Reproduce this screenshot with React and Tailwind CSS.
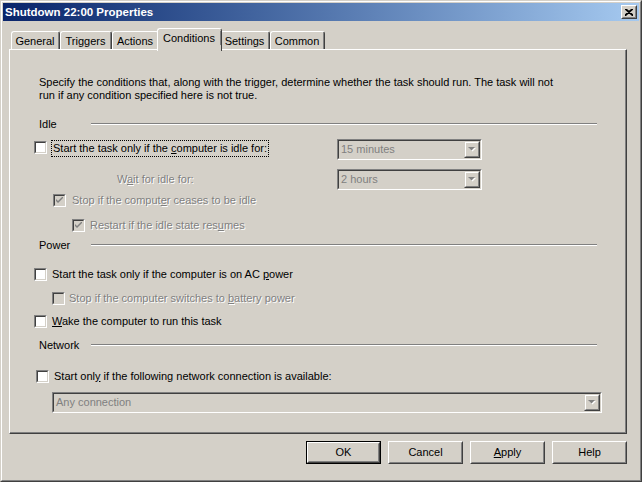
import React from "react";

const dis = "text-[#808080] [text-shadow:1px_1px_0_#ffffff]";

function Check() {
  return (
    <svg width="7" height="7" viewBox="0 0 7 7" className="block">
      <path d="M0 2 L0 4 L2 6 L7 1 L7 -1 L2 4 Z" fill="#808080" />
    </svg>
  );
}

function Checkbox({ checked, disabled }) {
  return (
    <span className="flex h-[13px] w-[13px] shrink-0 border border-t-[#808080] border-l-[#808080] border-r-white border-b-white">
      <span
        className={[
          "flex flex-1 items-center justify-center border border-t-[#404040] border-l-[#404040] border-r-[#d4d0c8] border-b-[#d4d0c8]",
          disabled ? "bg-[#d4d0c8]" : "bg-white",
        ].join(" ")}
      >
        {checked && <Check />}
      </span>
    </span>
  );
}

function Arrow() {
  return (
    <svg width="8" height="5" viewBox="0 0 8 5" className="block">
      <path d="M1 1 H8 L4.5 4.5 Z" fill="#ffffff" />
      <path d="M0 0 H7 L3.5 3.5 Z" fill="#808080" />
    </svg>
  );
}

function Dropdown({ value, width }) {
  return (
    <div
      className={`flex h-[21px] shrink-0 border border-t-[#808080] border-l-[#808080] border-r-white border-b-white ${width}`}
    >
      <div className="flex flex-1 items-center border border-t-[#404040] border-l-[#404040] border-r-[#d4d0c8] border-b-[#d4d0c8] bg-[#d4d0c8]">
        <span className="flex-1 pl-[2px] text-[#808080]">{value}</span>
        <span className="flex h-[17px] w-[16px] border border-t-[#d4d0c8] border-l-[#d4d0c8] border-r-[#404040] border-b-[#404040]">
          <span className="flex flex-1 items-center justify-center border border-t-white border-l-white border-r-[#808080] border-b-[#808080]">
            <Arrow />
          </span>
        </span>
      </div>
    </div>
  );
}

function Header({ label }) {
  return (
    <div className="ml-[29px] flex h-[14px] items-center">
      <span className="w-[52px]">{label}</span>
      <span className="h-[2px] w-[506px] border-t border-b border-t-[#808080] border-b-white" />
    </div>
  );
}

function Tab({ label, width, selected }) {
  if (selected) {
    return (
      <div
        className={`relative z-10 -mx-[2px] -mb-[2px] flex h-[23px] items-start justify-center rounded-t-[3px] border-t border-l border-r border-t-white border-l-white border-r-[#404040] bg-[#d4d0c8] pt-[2px] ${width}`}
      >
        <span className="flex-1 border-r border-r-[#808080] text-center leading-[14px]">{label}</span>
      </div>
    );
  }
  return (
    <div
      className={`flex h-[18px] items-start rounded-t-[3px] border-t border-l border-r border-t-white border-l-white border-r-[#404040] ${width}`}
    >
      <span className="h-full flex-1 border-r border-r-[#808080] pt-[3px] text-center leading-[13px]">
        {label}
      </span>
    </div>
  );
}

function Button({ children, def }) {
  return (
    <div
      className={[
        "flex h-[23px] w-[75px]",
        def ? "border border-black" : "",
      ].join(" ")}
    >
      <div className="flex flex-1 border border-t-white border-l-white border-r-[#404040] border-b-[#404040]">
        <div className="flex flex-1 items-center justify-center border border-t-[#d4d0c8] border-l-[#d4d0c8] border-r-[#808080] border-b-[#808080]">
          {children}
        </div>
      </div>
    </div>
  );
}

export default function App() {
  return (
    <div className="h-[482px] w-[642px] border border-t-[#d4d0c8] border-l-[#d4d0c8] border-r-[#404040] border-b-[#404040] bg-[#d4d0c8] font-['Liberation_Sans',Arial,sans-serif] text-[11px] leading-[13px] text-black">
      <div className="flex h-full flex-col border border-t-white border-l-white border-r-[#808080] border-b-[#808080] p-px">
        {/* title bar */}
        <div className="flex h-[18px] shrink-0 items-center bg-gradient-to-r from-[#0a246a] to-[#a6caf0] pl-[2px] pr-[2px]">
          <span className="flex-1 text-[11.5px] font-bold text-white">Shutdown 22:00 Properties</span>
          <span className="flex h-[14px] w-[16px] border border-t-white border-l-white border-r-[#404040] border-b-[#404040] bg-[#d4d0c8]">
            <span className="flex flex-1 items-center justify-center border border-t-[#d4d0c8] border-l-[#d4d0c8] border-r-[#808080] border-b-[#808080]">
              <svg width="8" height="7" viewBox="0 0 8 7" className="block">
                <path d="M0 0 L8 7 M1 0 L8 6.2 M8 0 L0 7 M7 0 L0 6.2" stroke="#000" strokeWidth="1.3" />
              </svg>
            </span>
          </span>
        </div>

        <div className="ml-[6px] mr-[12px] mt-[7px] flex flex-col">
          {/* tabs */}
          <div className="flex h-[21px] items-end pl-[2px]">
            <Tab label="General" width="w-[49px]" />
            <Tab label="Triggers" width="w-[52px]" />
            <Tab label="Actions" width="w-[47px]" />
            <Tab label="Conditions" width="w-[65px]" selected />
            <Tab label="Settings" width="w-[50px]" />
            <Tab label="Common" width="w-[55px]" />
          </div>

          {/* panel */}
          <div className="h-[385px] w-[618px] border border-t-white border-l-white border-r-[#404040] border-b-[#404040]">
            <div className="flex h-full flex-col border-r border-b border-r-[#808080] border-b-[#808080] pt-[26px]">
              <p className="ml-[29px] h-[26px]">
                Specify the conditions that, along with the trigger, determine whether the task should run. The task will not
                <br />
                run if any condition specified here is not true.
              </p>

              <div className="mt-[15px]">
                <Header label="Idle" />
              </div>

              <div className="ml-[24px] mt-[8px] flex h-[21px] items-start">
                <div className="flex w-[303px] items-start pt-[2px]">
                  <Checkbox />
                  <span className="-mt-[1px] ml-[4px] border border-dotted border-black px-px leading-[15px]">
                    Start the task only if the <span className="underline">c</span>omputer is idle for:
                  </span>
                </div>
                <Dropdown value="15 minutes" width="w-[145px]" />
              </div>

              <div className="ml-[107px] mt-[9px] flex h-[21px] items-center">
                <span className={`w-[220px] ${dis}`}>
                  W<span className="underline">a</span>it for idle for:
                </span>
                <Dropdown value="2 hours" width="w-[145px]" />
              </div>

              <div className="ml-[43px] mt-[2px] flex h-[17px] items-center gap-[6px]">
                <Checkbox checked disabled />
                <span className={dis}>
                  Stop if the comput<span className="underline">e</span>r ceases to be idle
                </span>
              </div>

              <div className="ml-[62px] mt-[8px] flex h-[17px] items-center gap-[5px]">
                <Checkbox checked disabled />
                <span className={dis}>
                  Restart if the idle state res<span className="underline">u</span>mes
                </span>
              </div>

              <div className="mt-[4px]">
                <Header label="Power" />
              </div>

              <div className="ml-[24px] mt-[14px] flex h-[17px] items-center gap-[5px]">
                <Checkbox />
                <span>
                  Start the task only if the computer is on AC <span className="underline">p</span>ower
                </span>
              </div>

              <div className="ml-[42px] mt-[7px] flex h-[17px] items-center gap-[4px]">
                <Checkbox disabled />
                <span className={dis}>
                  Stop if the computer switches to <span className="underline">b</span>attery power
                </span>
              </div>

              <div className="ml-[24px] mt-[6px] flex h-[17px] items-center gap-[5px]">
                <Checkbox />
                <span>
                  <span className="underline">W</span>ake the computer to run this task
                </span>
              </div>

              <div className="mt-[8px]">
                <Header label="Network" />
              </div>

              <div className="ml-[26px] mt-[16px] flex h-[17px] items-center gap-[5px]">
                <Checkbox />
                <span>
                  Start onl<span className="underline">y</span> if the following network connection is available:
                </span>
              </div>

              <div className="ml-[42px] mt-[7px]">
                <Dropdown value="Any connection" width="w-[550px]" />
              </div>
            </div>
          </div>

          {/* buttons */}
          <div className="mt-[7px] flex justify-end gap-[7px]">
            <Button def>OK</Button>
            <Button>Cancel</Button>
            <Button>
              <span>
                <span className="underline">A</span>pply
              </span>
            </Button>
            <Button>Help</Button>
          </div>
        </div>
      </div>
    </div>
  );
}
